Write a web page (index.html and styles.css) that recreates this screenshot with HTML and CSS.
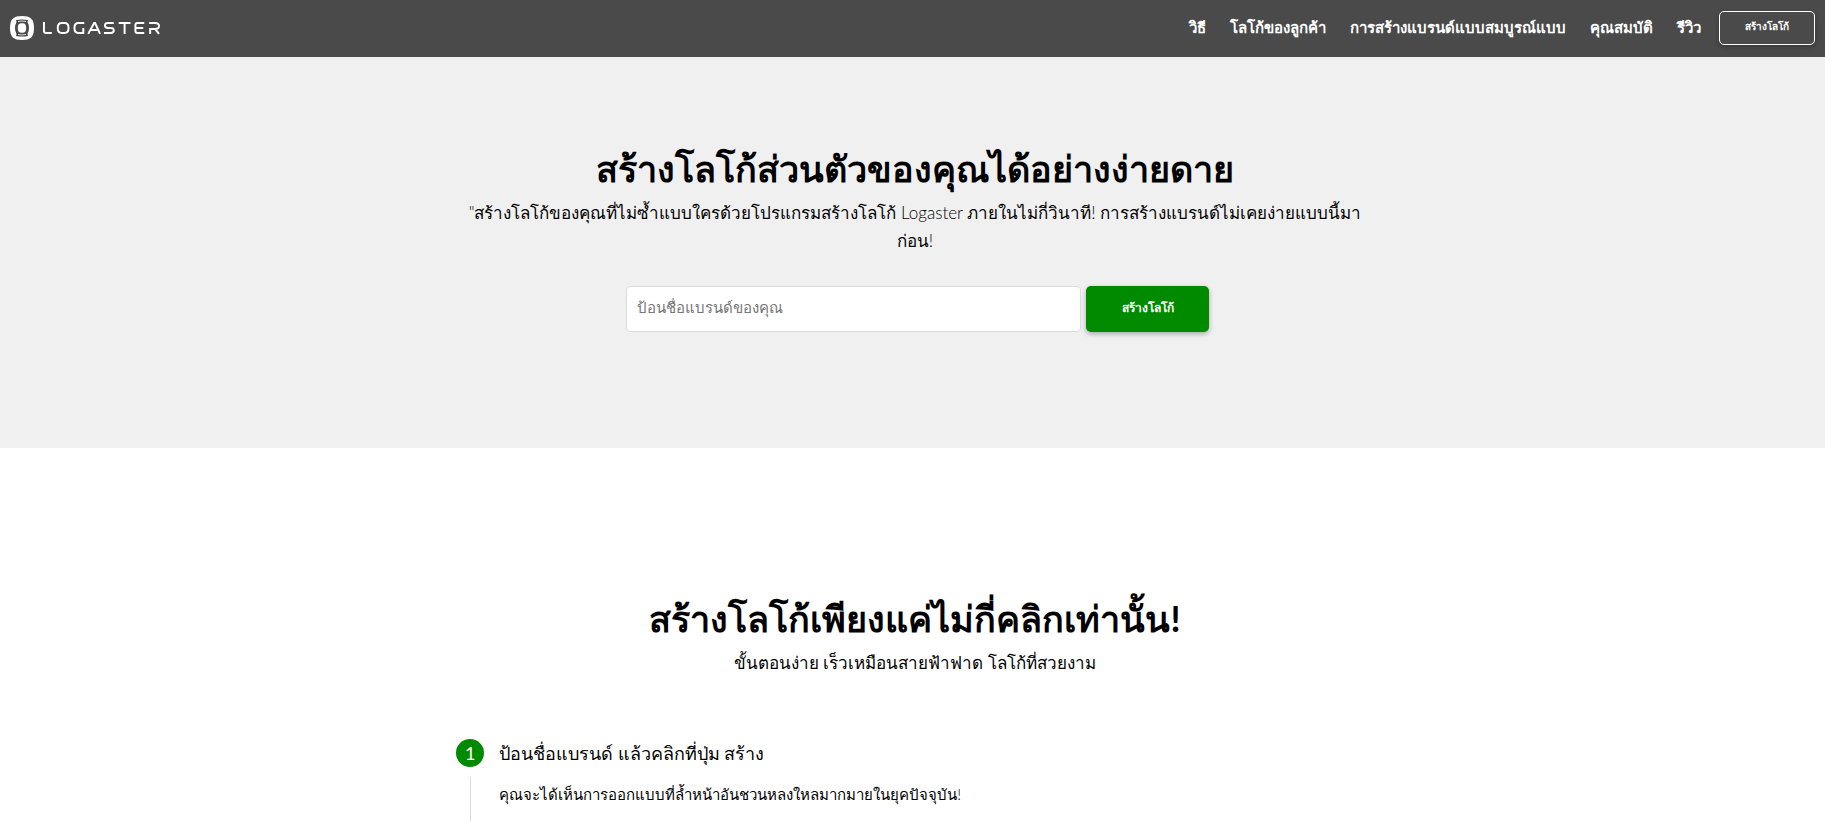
FILE: index.html
```html
<!DOCTYPE html>
<html lang="th">
<head>
<meta charset="utf-8">
<meta name="viewport" content="width=device-width, initial-scale=1">
<title>Logaster</title>
<link rel="stylesheet" href="styles.css">
</head>
<body>
<header class="navbar">
  <a class="brand" href="#" aria-label="Logaster">
    <svg class="brand-mark" viewBox="0 0 24 24" width="24" height="24" aria-hidden="true">
      <path fill="#fff" d="M12 0C20.500 0 24 3 24 12S20.500 24 12 24 0 21 0 12 3.500 0 12 0Z"/>
      <path fill="#4a4a4a" d="M6 4Q12 2.800 18 4L17.500 6Q19 8.500 19 12T17.500 18L18 20Q12 21.200 6 20L6.500 18Q5 15.500 5 12T6.500 6Z"/>
      <path fill="none" stroke="#fff" stroke-width="0.800" d="M8 5.500Q12 4.600 16 5.500M8 18.500Q12 19.400 16 18.500"/>
      <path fill="#fff" d="M12 7.200c3 0 4.200 1.300 4.200 4.800s-1.200 4.800-4.200 4.800-4.200-1.300-4.200-4.800 1.200-4.800 4.200-4.800Z"/>
    </svg>
    <svg class="brand-word" viewBox="0 0 120 14" width="118" height="14" aria-hidden="true" fill="none" stroke="#fff" stroke-width="2">
      <path d="M2 1V10Q2 12 4 12H10"/>
      <path d="M20 2H23Q27 2 27 7T23 12H20Q16 12 16 7T20 2Z"/>
      <path d="M43 2H37Q33 2 33 7T37 12H42V7"/>
      <path d="M47 13L53 2H54L59 13M49 9H58"/>
      <path d="M73 2H67Q64 2 64 4.500T67 7H70Q73 7 73 9.500T70 12H63"/>
      <path d="M78 2H90M84 2V13"/>
      <path d="M104 2H97Q95 2 95 4V10Q95 12 97 12H104M95 7H103"/>
      <path d="M110 13V7M109 2H115Q119 2 119 5T115 8H110M115 8L119 13"/>
    </svg>
  </a>
  <nav class="menu">
    <a href="#">วิธี</a>
    <a href="#">โลโก้ของลูกค้า</a>
    <a href="#">การสร้างแบรนด์แบบสมบูรณ์แบบ</a>
    <a href="#">คุณสมบัติ</a>
    <a href="#">รีวิว</a>
    <button class="menu-button" type="button">สร้างโลโก้</button>
  </nav>
</header>
<main>
  <section class="hero">
    <div class="container">
      <h1>สร้างโลโก้ส่วนตัวของคุณได้อย่างง่ายดาย</h1>
      <p class="lead">"สร้างโลโก้ของคุณที่ไม่ซ้ำแบบใครด้วยโปรแกรมสร้างโลโก้ Logaster ภายในไม่กี่วินาที! การสร้างแบรนด์ไม่เคยง่ายแบบนี้มาก่อน!</p>
      <form class="create">
        <input type="text" aria-label="ป้อนชื่อแบรนด์ของคุณ" placeholder="ป้อนชื่อแบรนด์ของคุณ">
        <button type="button">สร้างโลโก้</button>
      </form>
    </div>
  </section>
  <section class="steps">
    <div class="container">
      <h2>สร้างโลโก้เพียงแค่ไม่กี่คลิกเท่านั้น!</h2>
      <p class="lead">ขั้นตอนง่าย เร็วเหมือนสายฟ้าฟาด โลโก้ที่สวยงาม</p>
    </div>
    <ol class="step-list">
      <li class="step">
        <div class="marker"><span class="number">1</span></div>
        <div class="step-body">
          <h3>ป้อนชื่อแบรนด์ แล้วคลิกที่ปุ่ม สร้าง</h3>
          <p>คุณจะได้เห็นการออกแบบที่ล้ำหน้าอันชวนหลงใหลมากมายในยุคปัจจุบัน!</p>
        </div>
      </li>
    </ol>
  </section>
</main>
</body>
</html>
```
FILE: styles.css
```css
* { box-sizing: border-box; }
body {
  margin: 0;
  font-family: Lato, sans-serif;
  color: #000;
  background: #fff;
}
h1, h2, h3, p { margin: 0; }
.navbar {
  display: flex;
  align-items: center;
  justify-content: space-between;
  height: 57px;
  padding: 0 10px 2px;
  background: #4a4a4a;
}
.brand { display: flex; align-items: center; gap: 8px; }
.menu { display: flex; align-items: center; gap: 24px; }
.menu a {
  padding-bottom: 2px;
  color: #fff;
  font-size: 15px;
  font-weight: 700;
  line-height: 24px;
  text-decoration: none;
  white-space: nowrap;
}
.menu-button {
  width: 96px;
  height: 34px;
  margin-left: -6px;
  padding: 0 0 3px;
  border: 1px solid #fff;
  border-radius: 5px;
  background: transparent;
  color: #fff;
  font: 700 10px/16px Lato, sans-serif;
  box-shadow: 0 2px 5px rgba(0, 0, 0, 0.25);
}
.hero {
  padding: 85px 0 116px;
  background: #f0f0f0;
}
.container {
  width: 50%;
  margin: 0 auto;
  padding-left: 5px;
  text-align: center;
}
h1, h2 {
  font-size: 36px;
  font-weight: 700;
  line-height: 52px;
}
.lead {
  padding-top: 5px;
  font-size: 17px;
  font-weight: 300;
  line-height: 28px;
}
.create {
  display: flex;
  justify-content: center;
  gap: 5px;
  padding: 31px 0 0 5px;
}
.create input {
  width: 455px;
  height: 46px;
  padding: 0 10px 4px;
  border: 1px solid #dcdcdc;
  border-radius: 4px;
  background: #fff;
  font: 400 15px/24px Lato, sans-serif;
}
.create input::placeholder { color: #757575; opacity: 1; }
.create button {
  width: 123px;
  height: 46px;
  padding: 0 0 3px;
  border: 0;
  border-radius: 5px;
  background: #008a00;
  color: #fff;
  font: 700 12px/20px Lato, sans-serif;
  box-shadow: 0 2px 5px rgba(0, 0, 0, 0.3);
}
.steps { padding-top: 144px; }
.step-list {
  width: 50%;
  margin: 0 auto;
  padding: 62px 0 0;
  list-style: none;
}
.step { display: flex; gap: 15px; min-height: 82px; }
.marker {
  display: flex;
  flex-direction: column;
  align-items: center;
  gap: 10px;
}
.marker::after {
  content: "";
  flex: 1;
  width: 1px;
  background: #dcdcdc;
}
.number {
  width: 28px;
  height: 28px;
  border-radius: 50%;
  background: #008a00;
  color: #fff;
  font-size: 18px;
  line-height: 28px;
  text-align: center;
}
.step-body h3 {
  font-size: 18px;
  font-weight: 400;
  line-height: 28px;
}
.step-body p {
  padding-top: 15px;
  font-size: 15px;
  font-weight: 300;
  line-height: 24px;
}
```
